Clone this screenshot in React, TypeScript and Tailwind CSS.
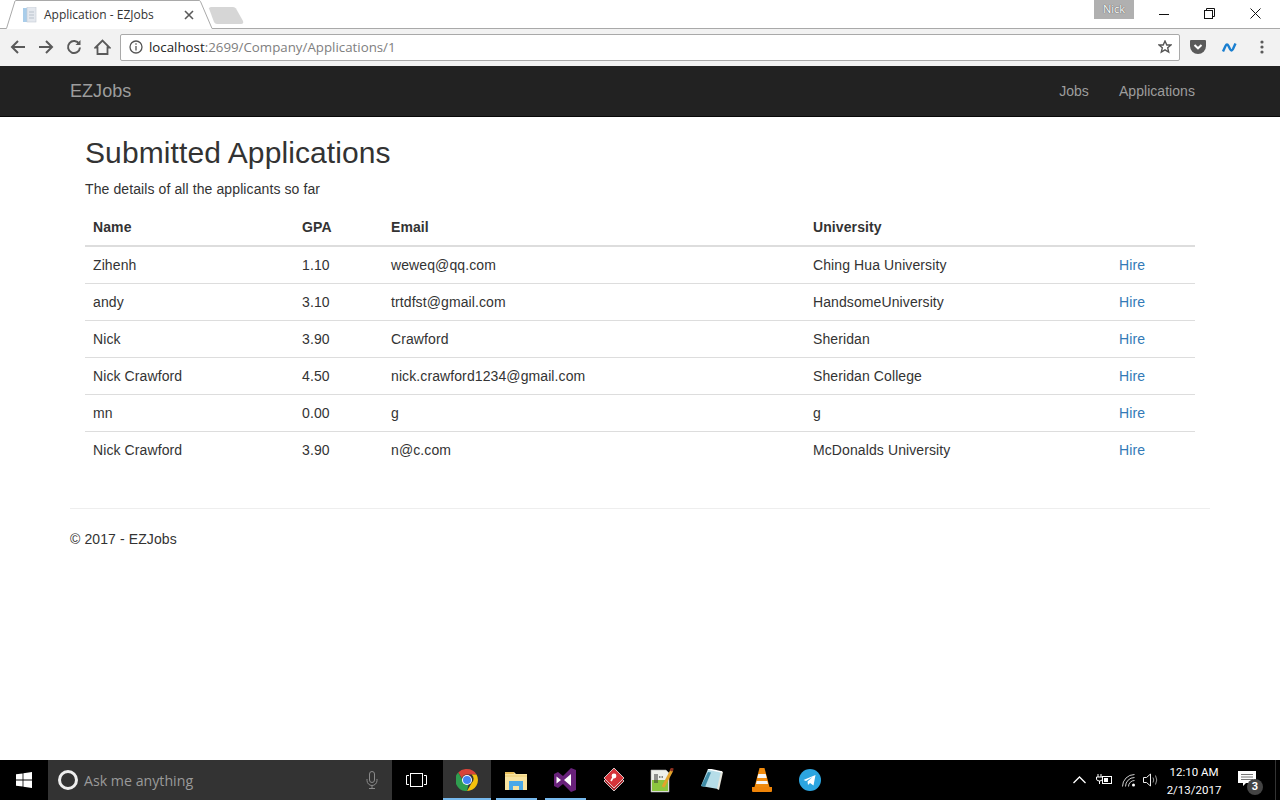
const rows = [
  ['Zihenh', '1.10', 'weweq@qq.com', 'Ching Hua University'],
  ['andy', '3.10', 'trtdfst@gmail.com', 'HandsomeUniversity'],
  ['Nick', '3.90', 'Crawford', 'Sheridan'],
  ['Nick Crawford', '4.50', 'nick.crawford1234@gmail.com', 'Sheridan College'],
  ['mn', '0.00', 'g', 'g'],
  ['Nick Crawford', '3.90', 'n@c.com', 'McDonalds University']
]

const TabStrip = () => (
  <div className="relative flex h-[29px] shrink-0 items-start bg-white">
    {/* tab outline and the line under the strip */}
    <svg className="absolute inset-0" width="1280" height="29">
      <path d="M0 28.500H6.500L15 1Q15.300 .5 16 .5H199Q200 .5 200.500 1.500L212 28.500H1280" fill="#fff" stroke="#a9a9a9" />
      <path d="M209 8.500Q209 7 211 7H233Q235 7 236 8.500L243 21Q244 24 241 24H217Q215 24 214 22Z" fill="#d6d6d6" />
    </svg>
    <div className="relative flex h-[30px] w-[212px] items-center pl-[23px]">
      <svg width="14" height="16" viewBox="0 0 14 16">
        <rect x="0" y="1" width="6" height="14" fill="#a9cdea" />
        <rect x="4" y="0" width="9" height="15" fill="#e4e8ee" stroke="#c3cad3" strokeWidth=".6" />
        <path d="M6 5h5M6 8h5M6 11h5" stroke="#b9c2cc" />
      </svg>
      <span className="ml-[7px] font-['Open_Sans',sans-serif] text-[12px] text-[#333]">Application - EZJobs</span>
      <svg className="ml-[30px]" width="10" height="10" viewBox="0 0 10 10">
        <path d="M1 1l8 8M9 1l-8 8" stroke="#5a5a5a" strokeWidth="1.600" />
      </svg>
    </div>
    <div className="relative ml-auto mr-[2px] flex h-7 items-start">
      <div className="mr-2 flex h-[19px] w-10 items-center justify-center bg-[#b0b0b0] font-['Open_Sans',sans-serif] text-[11px] text-white [text-shadow:0_0_1px_#222]">
        Nick
      </div>
      <div className="flex h-[26px] w-[45px] items-center justify-center">
        <svg width="11" height="11"><path d="M0 6.500h10" stroke="#111" /></svg>
      </div>
      <div className="flex h-[26px] w-[45px] items-center justify-center">
        <svg width="11" height="11" fill="none" stroke="#111">
          <path d="M2.500 2.500V.5h8v8h-2" />
          <rect x=".5" y="2.500" width="8" height="8" />
        </svg>
      </div>
      <div className="flex h-[26px] w-[46px] items-center justify-center">
        <svg width="11" height="11"><path d="M.5.5l10 10M10.500.5l-10 10" stroke="#111" /></svg>
      </div>
    </div>
  </div>
)

const Toolbar = () => (
  <div className="flex h-[37px] shrink-0 items-center bg-[#f2f2f2] pb-[1px]">
    <div className="flex w-[120px] items-center pl-[4px]">
      <div className="flex w-7 justify-center">
        <svg width="16" height="16" fill="none" stroke="#5a5a5a" strokeWidth="2">
          <path d="M15 8H2M8 2L2 8l6 6" />
        </svg>
      </div>
      <div className="flex w-7 justify-center">
        <svg width="16" height="16" fill="none" stroke="#5a5a5a" strokeWidth="2">
          <path d="M1 8h13M8 2l6 6-6 6" />
        </svg>
      </div>
      <div className="flex w-7 justify-center">
        <svg width="16" height="16" fill="none" stroke="#5a5a5a" strokeWidth="2">
          <path d="M13.200 5A6 6 0 1 0 14 8.500" />
          <path d="M14.500 1v5h-5z" fill="#5a5a5a" stroke="none" />
        </svg>
      </div>
      <div className="flex w-7 justify-center">
        <svg width="17" height="16" fill="none" stroke="#5a5a5a" strokeWidth="1.800">
          <path d="M1.500 8.500L8.500 1.500 15.500 8.500H13.500V15H3.500V8.500z" />
        </svg>
      </div>
    </div>
    <div className="flex h-[27px] w-[1060px] items-center rounded-[2px] border border-[#a9a9a9] bg-white pl-2 pr-[7px] font-['Open_Sans',sans-serif] text-[13.3px]">
      <svg width="14" height="14" viewBox="0 0 14 14" fill="none" stroke="#555" strokeWidth="1.300">
        <circle cx="7" cy="7" r="6" />
        <path d="M7 6v4.500M7 3.200v1.600" />
      </svg>
      <span className="ml-[6px] pt-[1px] text-[#222]">localhost</span>
      <span className="pt-[1px] text-[#808080]">:2699/Company/Applications/1</span>
      <svg className="ml-auto" width="14" height="14" viewBox="0 0 14 14" fill="none" stroke="#555" strokeWidth="1.400">
        <path d="M7 1l1.800 4H13l-3.300 2.800 1 4.300L7 9.900l-3.700 2.200 1-4.300L1 5h4.200z" />
      </svg>
    </div>
    <div className="ml-[10px] flex items-center">
      <svg width="16" height="14" viewBox="0 0 16 14">
        <path d="M1 0h14a1 1 0 0 1 1 1v5a8 8 0 0 1-16 0V1a1 1 0 0 1 1-1z" fill="#5a5a5a" />
        <path d="M4.500 5l3.500 3.300L11.500 5" fill="none" stroke="#fff" strokeWidth="2" />
      </svg>
      <svg className="ml-[16px]" width="15" height="9" viewBox="0 0 15 9" fill="none" stroke="#1a7fd0" strokeWidth="2.400">
        <path d="M1 8.500L3.500 3Q5 0 6.500 3L8 6Q9.500 9 11 6L13.500.5" />
      </svg>
      <svg className="ml-[23px]" width="4" height="14" fill="#5a5a5a">
        <circle cx="2" cy="2" r="1.600" />
        <circle cx="2" cy="7" r="1.600" />
        <circle cx="2" cy="12" r="1.600" />
      </svg>
    </div>
  </div>
)

const Navbar = () => (
  <div className="flex h-[51px] shrink-0 items-center border-b border-[#080808] bg-[#222] pl-[70px] pr-[85px] tracking-[0.05px] text-[#9d9d9d]">
    <span className="text-[18px]">EZJobs</span>
    <span className="ml-auto text-[14px]">Jobs</span>
    <span className="ml-[30px] text-[14px]">Applications</span>
  </div>
)

const Applications = () => (
  <div className="min-h-0 flex-1 overflow-hidden bg-white text-[14px] leading-5 tracking-[0.1px] text-[#333]">
    <div className="mx-[70px] w-[1140px]">
      <div className="px-[15px]">
        <h2 className="mt-[19px] mb-[10px] text-[30px] leading-[33px]">Submitted Applications</h2>
        <p className="mb-[10px]">The details of all the applicants so far</p>
        <table className="w-full table-fixed border-collapse">
          <colgroup>
            <col className="w-[209px]" />
            <col className="w-[89px]" />
            <col className="w-[422px]" />
            <col className="w-[306px]" />
            <col className="w-[84px]" />
          </colgroup>
          <thead>
            <tr className="border-b-2 border-[#ddd] text-left">
              <th className="p-2 font-bold">Name</th>
              <th className="p-2 font-bold">GPA</th>
              <th className="p-2 font-bold">Email</th>
              <th className="p-2 font-bold">University</th>
              <th className="p-2"></th>
            </tr>
          </thead>
          <tbody>
            {rows.map((row, i) => (
              <tr key={i} className="border-t border-[#ddd] first:border-t-0">
                {row.map((cell, j) => (
                  <td key={j} className="p-2">
                    {cell}
                  </td>
                ))}
                <td className="p-2 text-[#337ab7]">Hire</td>
              </tr>
            ))}
          </tbody>
        </table>
      </div>
      <hr className="mt-10 mb-5 border-[#eee]" />
      <p>© 2017 - EZJobs</p>
    </div>
  </div>
)

const TaskApp = ({ children, active, open }: { children: React.ReactNode; active?: boolean; open?: boolean }) => (
  <div className={active ? 'relative mr-px flex h-10 w-[48px] items-center justify-center bg-[#333]' : 'relative flex h-10 w-[49px] items-center justify-center'}>
    {children}
    {open && <div className={active ? 'absolute inset-x-0 bottom-0 h-[2px] bg-[#76b9ed]' : 'absolute inset-x-1 bottom-0 h-[2px] bg-[#76b9ed]'} />}
  </div>
)

const Taskbar = () => (
  <div className="flex h-10 shrink-0 items-center bg-[#000] font-['Open_Sans',sans-serif] text-white">
    <div className="flex h-10 w-12 items-center justify-center">
      <svg width="16" height="16" viewBox="0 0 16 16" fill="#fff">
        <path d="M0 2.300L6.600 1.400V7.600H0zM7.400 1.300L16 0V7.600H7.400zM0 8.400H6.600V14.600L0 13.700zM7.400 8.400H16V16L7.400 14.700z" />
      </svg>
    </div>
    <div className="flex h-10 w-[344px] items-center bg-[#333] pl-[10px] pr-[14px]">
      <div className="h-5 w-5 rounded-full border-[3px] border-[#eee]" />
      <span className="ml-[6px] pt-[1px] text-[14.2px] text-[#9a9a9a]">Ask me anything</span>
      <svg className="ml-auto" width="12" height="18" viewBox="0 0 12 18" fill="none" stroke="#8a8a8a">
        <rect x="3.500" y=".5" width="5" height="11" rx="2.500" />
        <path d="M1 8v1.500a5 5 0 0 0 10 0V8M6 14.500v3M3 17.500h6" />
      </svg>
    </div>
    <div className="flex h-10 w-[51px] items-center justify-center pr-[2px]">
      <svg width="21" height="14" fill="none" stroke="#fff">
        <rect x="4.500" y=".5" width="12" height="13" />
        <path d="M3 2.500H.5v9H3M18 2.500h2.500v9H18" />
      </svg>
    </div>
    <TaskApp active open>
      <svg width="22" height="22" viewBox="0 0 22 22">
        <path d="M11 0a11 11 0 0 1 9.500 5.500H11a5.500 5.500 0 0 0-5.200 3.700L2.200 3.600A11 11 0 0 1 11 0z" fill="#d8443a" />
        <path d="M20.500 5.500A11 11 0 0 1 11 22l4.600-8a5.500 5.500 0 0 0 0-8.500z" fill="#f4c20d" />
        <path d="M11 22A11 11 0 0 1 2.200 3.600L6.800 11.500a5 5 0 0 0 5.500 4.400z" fill="#2f9e4f" />
        <circle cx="11" cy="11" r="5" fill="#fff" />
        <circle cx="11" cy="11" r="4" fill="#4285f4" />
      </svg>
    </TaskApp>
    <TaskApp open>
      <svg className="mr-[2px]" width="22" height="19" viewBox="0 0 22 19">
        <path d="M0 1h9l2 2h11v16H0z" fill="#f8e3a0" />
        <path d="M0 1h9v2H0z" fill="#e8be58" />
        <path d="M0 5h22" stroke="#eccb6f" />
        <path d="M4 10h14v9h-4v-4H8v4H4z" fill="#4aa8e8" />
      </svg>
    </TaskApp>
    <TaskApp open>
      <svg className="mr-[2px]" width="22" height="24" viewBox="0 0 22 24">
        <path d="M0 6l4-2 5 4 8-8 5 2v20l-5 2-8-8-5 4-4-2z" fill="#68217a" />
        <path d="M2.500 8.500L7 12l-4.500 3.500zM17 6v12l-7-6z" fill="#fff" />
      </svg>
    </TaskApp>
    <TaskApp>
      <svg className="mr-[2px]" width="20" height="24" viewBox="0 0 20 24">
        <path d="M10 3l10 10-10 10L0 13z" fill="#a9282e" stroke="#eee" strokeWidth=".8" />
        <path d="M10 0l10 10-10 10L0 10z" fill="#d5343a" stroke="#eee" strokeWidth=".8" />
        <circle cx="10" cy="8" r="2.400" fill="#fff" />
        <path d="M10 8l-3 5" stroke="#fff" strokeWidth="1.600" />
      </svg>
    </TaskApp>
    <TaskApp>
      <svg className="mr-[4px]" width="24" height="25" viewBox="0 0 24 25">
        <path d="M1 2h15l3 3v19H1z" fill="#eef0ea" stroke="#aaa" strokeWidth=".6" />
        <path d="M2 12h16v11H2z" fill="#8cc63f" />
        <path d="M5 6v9M7 6v9" stroke="#333" />
        <path d="M9 9h4" stroke="#666" strokeDasharray="1.500 1" strokeWidth="1.500" />
        <path d="M13 19L22 2" stroke="#e3a32b" strokeWidth="3" />
        <path d="M21 3l1.500-3" stroke="#8c2f1f" strokeWidth="3" />
      </svg>
    </TaskApp>
    <TaskApp>
      <svg className="mr-[2px]" width="23" height="22" viewBox="0 0 23 22">
        <path d="M8 0l14 3-4 17L1 17z" fill="#b6dde8" />
        <path d="M1 17L8 3l3 .5L5 18z" fill="#3f8ba6" />
        <path d="M21 2l2 1-4 18-2-1z" fill="#e6e6dc" />
        <path d="M8 0l14 3" stroke="#fff" strokeWidth="1.500" />
      </svg>
    </TaskApp>
    <TaskApp>
      <svg width="20" height="24" viewBox="0 0 20 24">
        <path d="M7.500 0h5l5 19h-15z" fill="#f08a0c" />
        <path d="M6.300 6h7.400l1 4H5.300zM4.700 13h10.600l.7 3H4z" fill="#f5f5f5" />
        <path d="M0 19h20v4a1 1 0 0 1-1 1H1a1 1 0 0 1-1-1z" fill="#ef8408" />
      </svg>
    </TaskApp>
    <TaskApp>
      <svg className="mr-[2px]" width="22" height="22" viewBox="0 0 22 22">
        <circle cx="11" cy="11" r="11" fill="#2ca5e0" />
        <path d="M4.500 11L16.500 6l-2 10.500-3.500-2.500-2 2-.5-3.500 5-4.500-6.500 4z" fill="#fff" />
      </svg>
    </TaskApp>
    <div className="ml-auto flex items-center">
      <svg width="13" height="8" fill="none" stroke="#fff" strokeWidth="1.300"><path d="M.5 7L6.500 1l6 6" /></svg>
      <svg className="ml-[9px]" width="17" height="12" viewBox="0 0 17 12" fill="none" stroke="#fff">
        <path d="M3 0v3M6 0v3M1.500 3h6v2q0 2-3 2t-3-2zM4.500 7v3" />
        <rect x="7.500" y="2.500" width="9" height="7" fill="#000" />
        <rect x="9" y="4" width="4" height="4" fill="#fff" stroke="none" />
      </svg>
      <svg className="ml-[10px]" width="15" height="13" viewBox="0 0 15 13" fill="none" stroke="#ccc">
        <path d="M.5 12.500A12 12 0 0 1 12.500.5M3.500 12.500A9 9 0 0 1 12.500 3.500M6.500 12.500A6 6 0 0 1 12.500 6.500" />
        <circle cx="11.500" cy="11" r="1.500" fill="#fff" stroke="none" />
      </svg>
      <svg className="ml-[6px]" width="15" height="14" viewBox="0 0 15 14" fill="none" stroke="#eee">
        <path d="M.5 4.500h3L7.500 1v12l-4-3.500h-3z" />
        <path d="M10 4.500q1.500 2.500 0 5M12.500 2.500q2.500 4.500 0 9" stroke="#999" />
      </svg>
      <div className="ml-[6px] w-[60px] pt-[1px] text-center font-['Roboto',sans-serif] text-[11.5px] leading-[18px]">
        <div>12:10 AM</div>
        <div>2/13/2017</div>
      </div>
      <div className="relative ml-[4px] mr-[7px] flex h-10 w-[40px] items-center justify-center">
        <svg className="mb-[3px] mr-[3px]" width="18" height="16" viewBox="0 0 18 16">
          <path d="M0 0h18v12H8l-3 3v-3H0z" fill="#fff" />
          <path d="M3 3.500h12M3 6h12M3 8.500h12" stroke="#777" />
        </svg>
        <span className="absolute bottom-[5px] right-[5px] flex h-4 w-4 items-center justify-center rounded-full bg-[#444] font-['Roboto',sans-serif] text-[11px] font-bold">3</span>
      </div>
      <div className="h-10 w-px bg-[#333]" />
      <div className="w-1" />
    </div>
  </div>
)

export default function App() {
  return (
    <div className="flex h-screen w-screen flex-col overflow-hidden font-['Liberation_Sans',Arial,sans-serif]">
      <TabStrip />
      <Toolbar />
      <Navbar />
      <Applications />
      <Taskbar />
    </div>
  )
}
